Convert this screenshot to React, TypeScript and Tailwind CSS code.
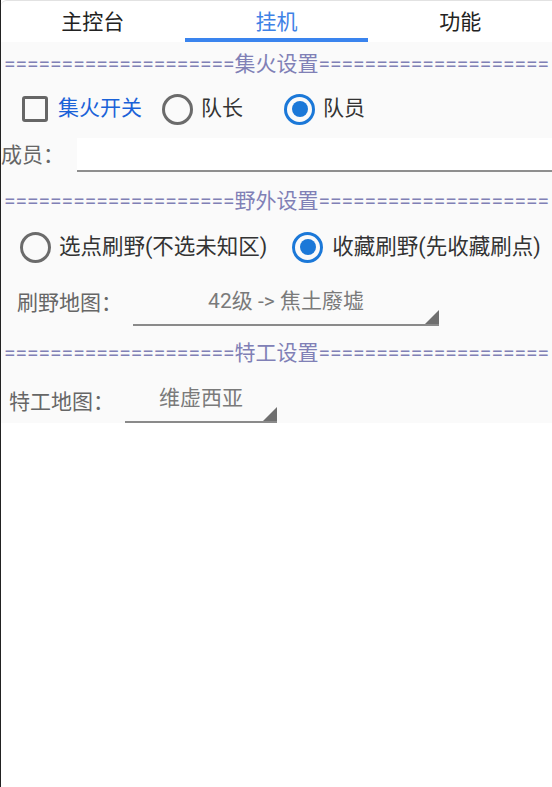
import React from "react";

const FONT = "font-['Roboto','Noto_Sans_CJK_SC',sans-serif]";

function SectionTitle({ title }: { title: string }) {
  const eq = "====================";
  return (
    <div className="h-[28px] leading-[28px] text-[21px] text-[#8080b6] whitespace-nowrap overflow-hidden text-center">
      {eq}
      {title}
      {eq}
    </div>
  );
}

function Radio({ checked }: { checked?: boolean }) {
  return checked ? (
    <div className="w-[31px] h-[31px] rounded-full border-[3px] border-[#1b78d8] flex items-center justify-center shrink-0">
      <div className="w-[16px] h-[16px] rounded-full bg-[#1b78d8]" />
    </div>
  ) : (
    <div className="w-[31px] h-[31px] rounded-full border-[3px] border-[#6b6b6b] shrink-0" />
  );
}

function Spinner({ value, width }: { value: string; width: string }) {
  return (
    <div className={`relative h-[46px] border-b-2 border-[#8a8a8a] flex items-start justify-center pt-[7px] ${width}`}>
      <span className="text-[21px] leading-[28px] text-[#7a7a7a]">{value}</span>
      <span className="absolute right-0 bottom-0 w-[14px] h-[14px] bg-[#6f6f6f] [clip-path:polygon(100%_0,100%_100%,0_100%)]" />
    </div>
  );
}

export default function App() {
  return (
    <div className={`w-full h-[787px] bg-white border-l border-[#222] ${FONT}`}>
      {/* tabs */}
      <div className="flex h-[42px] bg-white border-t border-[#e2e2e2] rounded-tl-[6px]">
        {[
          { label: "主控台", active: false },
          { label: "挂机", active: true },
          { label: "功能", active: false },
        ].map((t) => (
          <div key={t.label} className="flex-1 flex flex-col">
            <div
              className={`flex-1 min-h-0 text-center text-[21px] leading-[28px] pt-[7px] ${
                t.active ? "text-[#3f82e6]" : "text-[#222]"
              }`}
            >
              {t.label}
            </div>
            <div className={`h-[4px] shrink-0 ${t.active ? "bg-[#3a84ee]" : ""}`} />
          </div>
        ))}
      </div>

      <div className="bg-[#fafafa] pt-[8px] h-[381px]">
        <SectionTitle title="集火设置" />

        {/* 集火 row */}
        <div className="mt-[10px] h-[42px] flex items-center text-[21px]">
          <div className="ml-[21px] w-[26px] h-[26px] border-[3px] border-[#666] rounded-[3px] shrink-0" />
          <span className="ml-[10px] text-[#1a62d8]">集火开关</span>
          <div className="ml-[20px]">
            <Radio />
          </div>
          <span className="ml-[8px] text-[#333]">队长</span>
          <div className="ml-[41px]">
            <Radio checked />
          </div>
          <span className="ml-[8px] text-[#333]">队员</span>
        </div>

        {/* 成员 row */}
        <div className="h-[44px] flex text-[21px]">
          <span className="mt-[11px] leading-[28px] text-[#666] w-[76px] shrink-0">成员：</span>
          <div className="flex-1 mt-[8px] h-[34px] bg-white border-b-2 border-[#8e8e8e]" />
        </div>

        <div className="mt-[13px]">
          <SectionTitle title="野外设置" />
        </div>

        <div className="mt-[11px] h-[42px] flex items-center text-[21px] text-[#333]">
          <div className="ml-[19px]">
            <Radio />
          </div>
          <span className="ml-[8px] text-[21.5px]">选点刷野(不选未知区)</span>
          <div className="ml-[25px]">
            <Radio checked />
          </div>
          <span className="ml-[9px] whitespace-nowrap text-[21.5px]">收藏刷野(先收藏刷点)</span>
        </div>

        <div className="mt-[12px] flex text-[21px]">
          <span className="ml-[16px] w-[116px] shrink-0 mt-[9px] leading-[28px] text-[#666]">刷野地图：</span>
          <Spinner value="42级 -> 焦土廢墟" width="w-[306px]" />
        </div>

        <div className="mt-[13px]">
          <SectionTitle title="特工设置" />
        </div>

        <div className="mt-[10px] flex text-[21px]">
          <span className="ml-[8px] w-[116px] shrink-0 mt-[11px] leading-[28px] text-[#666]">特工地图：</span>
          <Spinner value="维虚西亚" width="w-[152px]" />
        </div>
      </div>
    </div>
  );
}
